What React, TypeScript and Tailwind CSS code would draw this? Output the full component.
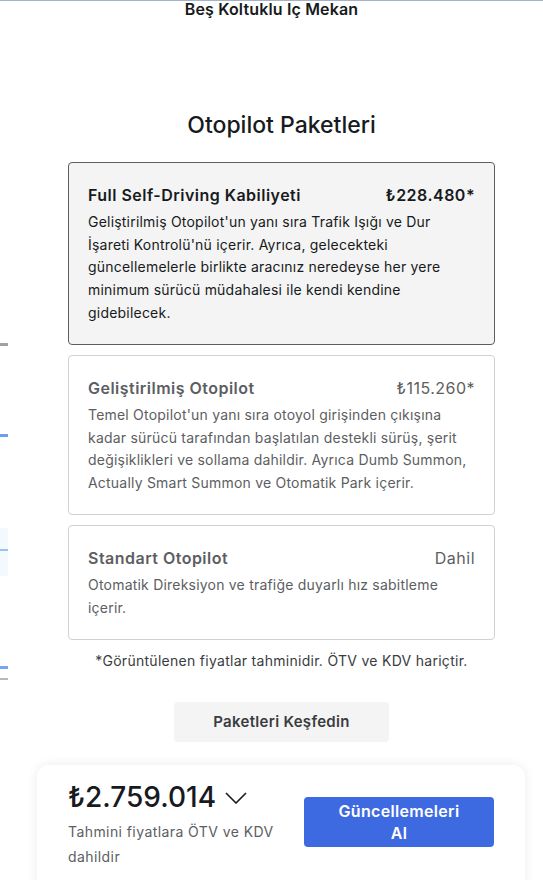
type Pkg = {
  title: string;
  price: string;
  text: string;
  selected?: boolean;
};

const packages: Pkg[] = [
  {
    title: "Full Self-Driving Kabiliyeti",
    price: "₺228.480*",
    text: "Geliştirilmiş Otopilot'un yanı sıra Trafik Işığı ve Dur İşareti Kontrolü'nü içerir. Ayrıca, gelecekteki güncellemelerle birlikte aracınız neredeyse her yere minimum sürücü müdahalesi ile kendi kendine gidebilecek.",
    selected: true,
  },
  {
    title: "Geliştirilmiş Otopilot",
    price: "₺115.260*",
    text: "Temel Otopilot'un yanı sıra otoyol girişinden çıkışına kadar sürücü tarafından başlatılan destekli sürüş, şerit değişiklikleri ve sollama dahildir. Ayrıca Dumb Summon, Actually Smart Summon ve Otomatik Park içerir.",
  },
  {
    title: "Standart Otopilot",
    price: "Dahil",
    text: "Otomatik Direksiyon ve trafiğe duyarlı hız sabitleme içerir.",
  },
];

function PackageCard({ pkg }: { pkg: Pkg }) {
  return (
    <div
      className={
        pkg.selected
          ? "rounded-[4px] border border-[#5c5e62] bg-[#f4f4f4] px-[19px] pb-[19.5px] pt-[21px]"
          : "rounded-[4px] border border-[#d0d1d2] bg-white px-[19px] pb-[19.5px] pt-[21px]"
      }
    >
      <div className="flex items-center justify-between leading-[22px] tracking-[0.03em]">
        <h3
          className={
            pkg.selected
              ? "text-[16px] font-semibold text-[#171a20]"
              : "text-[16px] font-semibold text-[#5c5e62]"
          }
        >
          {pkg.title}
        </h3>
        <span
          className={
            pkg.selected
              ? "text-[16px] font-semibold text-[#171a20]"
              : "text-[16px] text-[#5c5e62]"
          }
        >
          {pkg.price}
        </span>
      </div>
      <p
        className={
          pkg.selected
            ? "mt-[5px] text-[14px] leading-[22.7px] tracking-[0.015em] text-[#171a20]"
            : "mt-[5px] text-[14px] leading-[22.7px] tracking-[0.015em] text-[#5c5e62]"
        }
      >
        {pkg.text}
      </p>
    </div>
  );
}

export default function App() {
  return (
    <div className="relative h-[880px] w-[543px] overflow-hidden border-t border-[#a3b1c9] bg-white font-['Inter',sans-serif]">
      {/* peeking bits of the gallery on the left */}
      <div className="absolute left-0 top-[342px] h-[3px] w-[8px] bg-[#9fa1a4]" />
      <div className="absolute left-0 top-[433px] h-[3px] w-[8px] bg-[#6f9ef0]" />
      <div className="absolute left-0 top-[527px] h-[48px] w-[8px] bg-[#f2fafe]" />
      <div className="absolute left-0 top-[548px] h-[2px] w-[8px] bg-[#9fc0f2]" />
      <div className="absolute left-0 top-[665px] h-[3px] w-[8px] bg-[#74a6f6]" />
      <div className="absolute left-0 top-[677px] h-[2px] w-[8px] bg-[#b8b9bb]" />

      <p className="-mt-[2px] text-center text-[16px] font-semibold leading-[20px] tracking-[0.01em] text-[#171a20]">
        Beş Koltuklu Iç Mekan
      </p>

      <div className="ml-[68px] w-[427px]">
        <h2 className="mt-[91px] text-center text-[23px] font-medium leading-[30px] text-[#171a20]">
          Otopilot Paketleri
        </h2>

        <div className="mt-[22px] flex flex-col gap-[10px]">
          {packages.map((p) => (
            <PackageCard key={p.title} pkg={p} />
          ))}
        </div>

        <p className="mt-[11px] text-center text-[14px] leading-[20px] tracking-[0.02em] text-[#393c41]">
          *Görüntülenen fiyatlar tahminidir. ÖTV ve KDV hariçtir.
        </p>

        <div className="mt-[31px] flex justify-center">
          <button className="h-[40px] w-[215px] rounded-[4px] bg-[#f4f4f4] text-[15px] font-semibold tracking-[0.02em] text-[#393c41]">
            Paketleri Keşfedin
          </button>
        </div>
      </div>

      <div className="ml-[37px] mt-[23px] flex h-[140px] w-[488px] items-start justify-between rounded-[12px] bg-white px-[31px] pt-[17px] shadow-[0_0_12px_rgba(0,0,0,0.08)]">
        <div>
          <div className="flex items-center gap-[9px]">
            <span className="text-[28px] font-medium leading-[30px] text-[#171a20]">
              ₺2.759.014
            </span>
            <svg width="22" height="12" viewBox="0 0 22 12" className="mt-[2px] text-[#171a20]">
              <polyline points="1,1 11,11 21,1" fill="none" stroke="currentColor" strokeWidth="1.6" />
            </svg>
          </div>
          <p className="mt-[7px] w-[225px] text-[14px] leading-[25px] tracking-[0.03em] text-[#5c5e62]">
            Tahmini fiyatlara ÖTV ve KDV dahildir
          </p>
        </div>
        <button className="mt-[15px] h-[50px] w-[190px] rounded-[4px] bg-[#3e6ae1] px-[34px] text-[16px] font-semibold leading-[22px] tracking-[0.02em] text-white">
          Güncellemeleri Al
        </button>
      </div>
    </div>
  );
}
